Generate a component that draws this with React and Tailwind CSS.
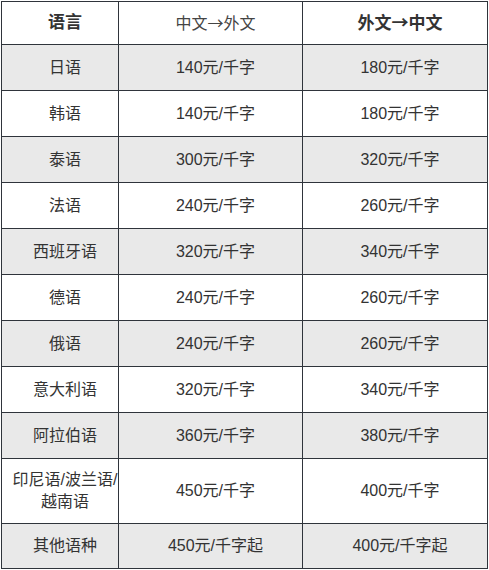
import React from "react";

const rows = [
  ["日语", "140元/千字", "180元/千字"],
  ["韩语", "140元/千字", "180元/千字"],
  ["泰语", "300元/千字", "320元/千字"],
  ["法语", "240元/千字", "260元/千字"],
  ["西班牙语", "320元/千字", "340元/千字"],
  ["德语", "240元/千字", "260元/千字"],
  ["俄语", "240元/千字", "260元/千字"],
  ["意大利语", "320元/千字", "340元/千字"],
  ["阿拉伯语", "360元/千字", "380元/千字"],
  ["印尼语/波兰语/越南语", "450元/千字", "400元/千字"],
  ["其他语种", "450元/千字起", "400元/千字起"],
];

const Arrow = () => (
  <span style={{ fontFamily: '"Noto Sans CJK SC", sans-serif' }}>→</span>
);

const cell = "border border-[#2f343b] pl-[10px] pr-0";

const App = () => {
  return (
    <div className="w-[489px] h-[570px] bg-white pt-px pl-px">
      <table
        className="w-[487px] border-collapse text-[16px] text-[#333] text-center"
        style={{ fontFamily: '"Liberation Sans", "Noto Sans CJK SC", sans-serif' }}
      >
        <tbody>
          <tr className="h-[43px]">
            <td className={cell + " w-[117px] font-bold text-[17px]"}>语言</td>
            <td className={cell + " w-[184px] text-[#444]"}>
              中文<Arrow />外文
            </td>
            <td className={cell + " font-bold text-[17px]"}>
              外文<Arrow />中文
            </td>
          </tr>
          {rows.map((r, i) => (
            <tr
              key={i}
              className={
                (i % 2 === 0 ? "bg-[#e9e9e9] " : "bg-white ") +
                (i === 9 ? "h-[65px]" : i === 10 ? "h-[45px]" : "h-[46px]")
              }
            >
              <td className={cell + " leading-[22px]"}>
                {i === 9 ? (
                  <>
                    印尼语/波兰语/
                    <br />
                    越南语
                  </>
                ) : (
                  r[0]
                )}
              </td>
              <td className={cell}>{r[1]}</td>
              <td className={cell}>{r[2]}</td>
            </tr>
          ))}
        </tbody>
      </table>
    </div>
  );
};

export default App;
